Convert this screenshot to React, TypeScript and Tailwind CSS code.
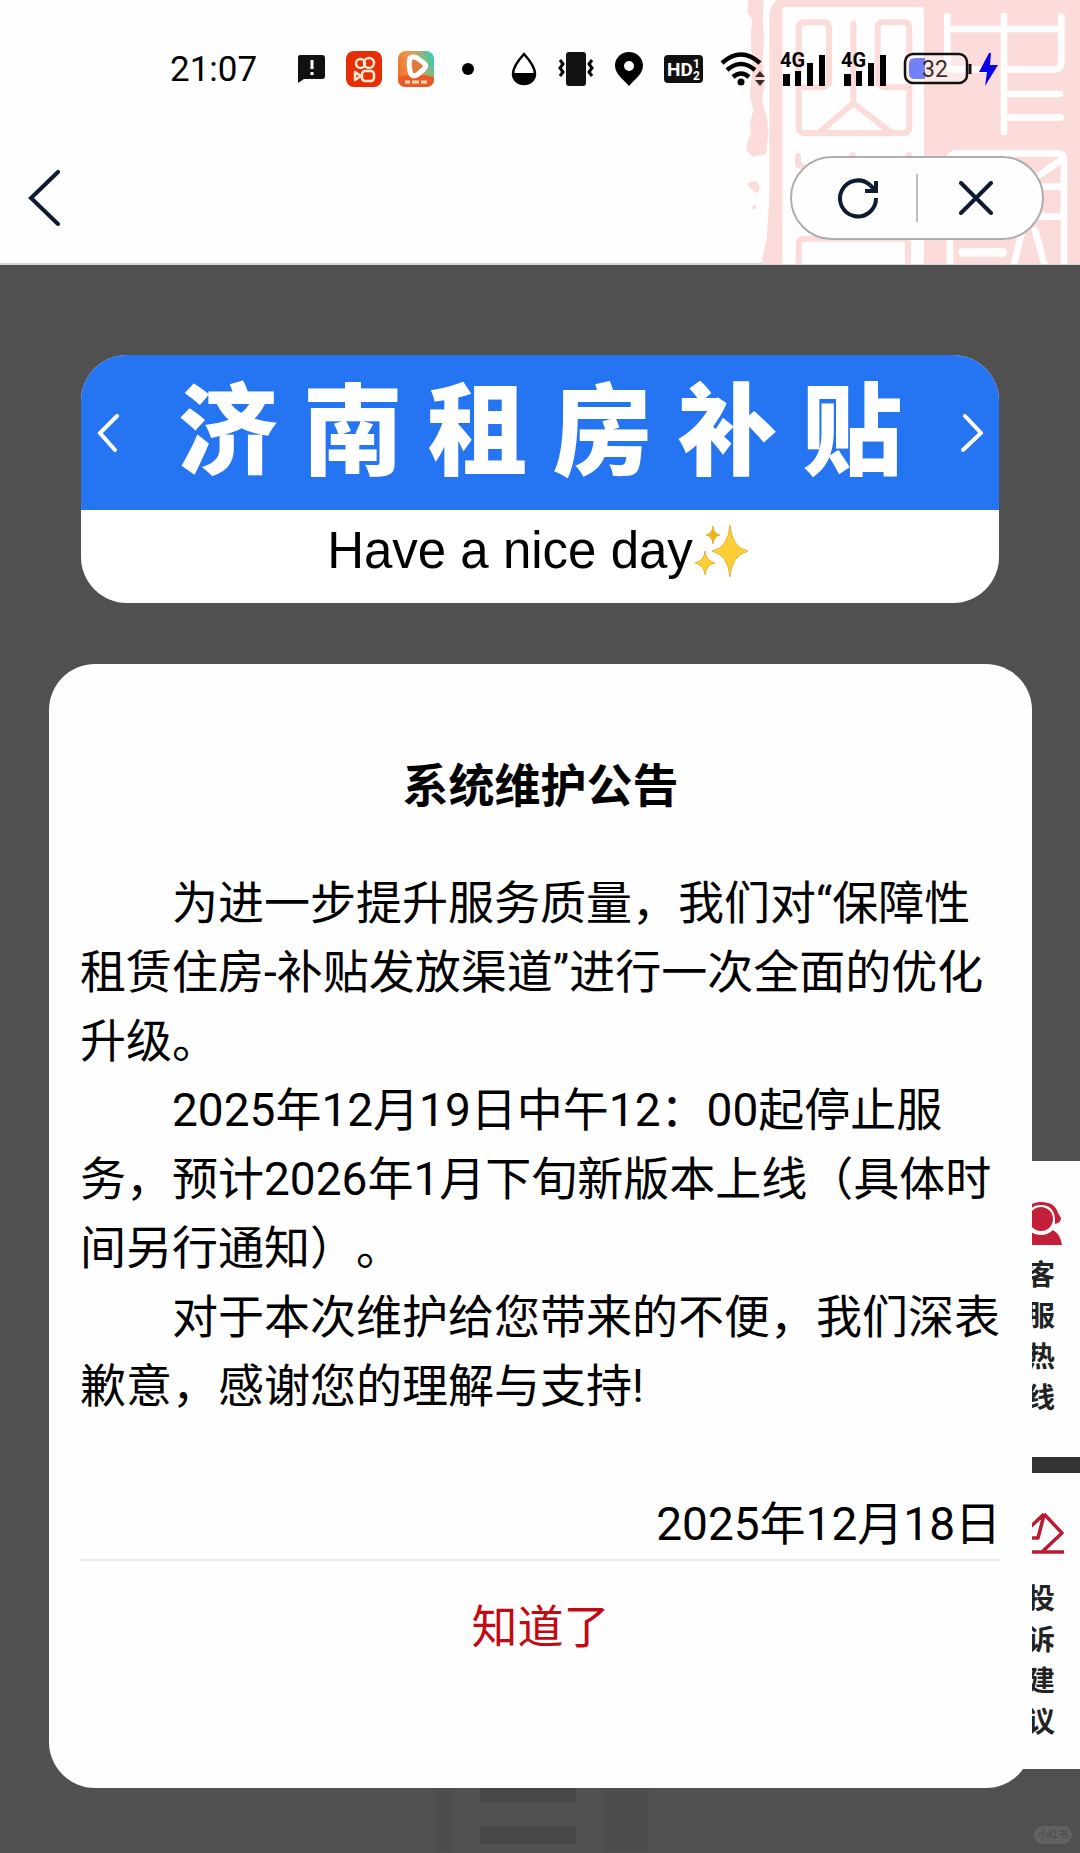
import { useState } from "react";

const seal = "#fbdcda";

const SealBackdrop = () => (
  <svg
    viewBox="0 0 1080 792"
    className="absolute top-0 right-0 w-[360px] h-[264px]"
    fill="none"
    aria-hidden="true"
  >
    <path
      fill={seal}
      d="M85 0H132L128 60L132 110L128 190L134 250L126 300L142 360L145 400L138 462L98 471L79 450L82 425L92 405L90 370L100 330L90 290L97 200L92 100L97 60L82 35Z"
    />
    <path fill={seal} d="M84 550Q104 535 118 555Q122 572 106 580L97 568Q86 565 84 550Z" />
    <circle cx="103" cy="622" r="6" fill={seal} />
    <path fill={seal} d="M170 0H1080V792H124L140 715L148 600V45Q150 15 170 0Z" />
    <path fill="#fefefe" d="M188 22H612V792H188Z" />
    <g stroke={seal} strokeWidth="18" strokeLinecap="round" strokeLinejoin="round">
      <path d="M327 250V85Q327 67 308 67H255Q236 67 236 85V380Q236 399 255 399H550Q568 399 568 380V85Q568 67 550 67H490Q473 67 473 85V250" />
      <path d="M236 262H300Q327 262 327 235M568 262H500Q473 262 473 235" />
      <path d="M400 70V310M400 310L300 395M400 310L510 395" />
      <path d="M234 468V495L250 500M398 466V480M566 466V480" />
      <path d="M236 800V732Q236 716 252 716H550Q564 716 564 732V800" />
    </g>
    <g stroke="#fefefe" strokeWidth="20" strokeLinecap="round" strokeLinejoin="round">
      <path d="M682 48V190Q682 208 700 208H800M682 87H1024V50M1024 87V190Q1024 208 1006 208H852" />
      <path d="M852 48V395M852 282H1020M852 352H1022" />
      <path d="M690 800V480Q690 460 710 460H1010Q1032 460 1032 482V800" />
      <path d="M930 545L1020 482M940 560H1032M930 650H1032M905 700L880 800M945 690L975 800" />
      <path d="M728 757H848" strokeWidth="26" />
    </g>
  </svg>
);

const Signal = ({ className }: { className: string }) => (
  <svg viewBox="0 -4 46 44" className={className} aria-label="4G">
    <text x="0" y="16" fontSize="20" fontWeight="700" fontFamily="Roboto, sans-serif">
      4G
    </text>
    <path d="M3 23h7v12H3zM15 20h6v15h-6zM27 12h6v23h-6zM39 4h6v31h-6z" />
  </svg>
);

const StatusBar = () => (
  <div className="relative h-[138px] pl-[170px] flex items-center gap-3">
    <span className="w-28 text-[35px] leading-none">21:07</span>
    <svg viewBox="0 0 36 36" className="w-9 h-9">
      <path d="M6 4h22q3 0 3 3v18q0 3-3 3H10l-6 4V6q0-2 2-2z" fill="#111" />
      <path d="M18 9v9M18 21v3" stroke="#fff" strokeWidth="3" />
    </svg>
    <svg viewBox="0 0 44 36" className="w-11 h-9" fill="none" stroke="#ffe9d0" strokeWidth="2.5">
      <rect x="4" y="0" width="36" height="36" rx="8" fill="#e62e06" stroke="none" />
      <circle cx="18.5" cy="12.5" r="4.5" />
      <circle cx="27" cy="12" r="5" />
      <rect x="20" y="20" width="12" height="10" rx="3" />
      <path d="M13 21l6 4-6 4z" strokeLinejoin="round" />
    </svg>
    <svg viewBox="0 0 36 36" className="w-9 h-9">
      <defs>
        <linearGradient id="app" x1="0" y1="0.6" x2="1" y2="0.2">
          <stop offset="0" stopColor="#ee7428" />
          <stop offset="0.5" stopColor="#e79a50" />
          <stop offset="1" stopColor="#2fd0b4" />
        </linearGradient>
      </defs>
      <rect width="36" height="36" rx="8" fill="url(#app)" />
      <path d="M0 26Q18 21 36 26V28Q36 36 28 36H8Q0 36 0 28Z" fill="#ea5a24" />
      <path
        d="M12 7q3-2 7 0l7 5q3 3 0 6l-7 6q-4 2-6-1-3-8-1-16z"
        fill="#e07a3c"
        stroke="#fff"
        strokeWidth="5"
        strokeLinejoin="round"
      />
      <path d="M7 31h5M14 31h7M23 31h6" stroke="#ffd9b8" strokeWidth="3" />
    </svg>
    <svg viewBox="0 0 44 36" className="w-11 h-9">
      <circle cx="22" cy="18" r="6" />
    </svg>
    <svg viewBox="0 0 44 36" className="w-11 h-9">
      <path
        d="M22 3Q11 15 11 23a11 10 0 0 0 22 0Q33 15 22 3z"
        fill="none"
        stroke="#000"
        strokeWidth="2.5"
      />
      <path d="M11 22h22q0 11-11 11t-11-11z" />
    </svg>
    <svg viewBox="0 0 36 36" className="w-9 h-9">
      <rect x="8" y="1" width="20" height="34" rx="3" fill="#111" />
      <path
        d="M2 9l3 4-3 4 3 4-3 4M34 9l-3 4 3 4-3 4 3 4"
        fill="none"
        stroke="#000"
        strokeWidth="3"
      />
    </svg>
    <svg viewBox="0 0 46 36" className="w-[46px] h-9">
      <path
        d="M23 1C15 1 9 7 9 14.5C9 23 17 28 23 35C29 28 37 23 37 14.5C37 7 31 1 23 1zM23 10a5 5 0 1 1 0 10a5 5 0 1 1 0-10z"
        fillRule="evenodd"
      />
    </svg>
    <svg viewBox="0 0 40 36" className="w-10 h-9" fontFamily="Roboto, sans-serif" fontWeight="700">
      <rect x="0" y="4" width="39" height="28" rx="4" fill="#111" />
      <text x="3" y="25" fontSize="19" fill="#fff">
        HD
      </text>
      <text x="29" y="17" fontSize="12" fill="#fff">
        1
      </text>
      <text x="29" y="29" fontSize="12" fill="#fff">
        2
      </text>
    </svg>
    <svg viewBox="0 0 52 36" className="w-[52px] h-9">
      <g fill="none" stroke="#000" strokeWidth="4.5">
        <path d="M6 12Q25-5 44 12" />
        <path d="M11 19Q25 7 39 19" />
        <path d="M17 26Q25 19 33 26" />
      </g>
      <circle cx="25" cy="31" r="3.5" />
      <path d="M44 20l5 6H39zM44 35l5-6H39z" fill="#3a2c2c" />
    </svg>
    <Signal className="w-[46px] h-11" />
    <Signal className="w-[52px] h-11" />
    <svg viewBox="0 0 98 36" className="w-[98px] h-9">
      <rect
        x="3"
        y="3"
        width="62"
        height="29"
        rx="8"
        fill="#fefefe"
        fillOpacity="0.4"
        stroke="#111"
        strokeWidth="2.5"
      />
      <path d="M13 7h10v21H13q-6 0-6-6v-9q0-6 6-6z" fill="#7480f5" />
      <path d="M68 13v10" stroke="#111" strokeWidth="3" />
      <text x="20" y="26" fontSize="23" fill="#3a2c2c" fontFamily="Roboto, sans-serif">
        32
      </text>
      <path d="M87 2L77 21h8l-2 14L96 14h-8l1-12z" fill="#0c00e8" />
    </svg>
  </div>
);

const TitleBar = () => (
  <div className="relative h-[120px] pl-7 pr-9 flex items-center justify-between">
    <button aria-label="返回">
      <svg viewBox="0 0 32 56" className="w-8 h-14" fill="none" stroke="#0d1b33" strokeWidth="4">
        <path d="M30 2L3 28L30 54" strokeLinecap="round" />
      </svg>
    </button>
    <div className="w-[254px] h-[84px] pr-1 rounded-full border-2 border-[#adadad] bg-[#fefefe] flex items-center">
      <button aria-label="刷新" className="flex-1 flex justify-center pl-2">
        <svg
          viewBox="0 0 42 42"
          className="w-[42px] h-[42px]"
          fill="none"
          stroke="#0d1b33"
          strokeWidth="4"
        >
          <path d="M39 21A18 18 0 1 1 33 8" />
          <path d="M39 4V14H28M33 8l5 5" />
        </svg>
      </button>
      <span className="w-[2px] h-12 bg-[#bdbdbd]" />
      <button aria-label="关闭" className="flex-1 flex justify-center pr-1">
        <svg
          viewBox="0 0 34 34"
          className="w-[34px] h-[34px]"
          stroke="#0d1b33"
          strokeWidth="4"
          strokeLinecap="round"
        >
          <path d="M2 2L32 32M32 2L2 32" />
        </svg>
      </button>
    </div>
  </div>
);

const Banner = () => (
  <section className="mx-[81px] mt-[90px] rounded-[46px] overflow-hidden bg-white">
    <div className="h-[155px] px-4 bg-[#2575f3] flex items-center justify-between text-white">
      <button aria-label="上一个">
        <svg
          viewBox="0 0 22 38"
          className="w-[22px] h-[38px]"
          fill="none"
          stroke="currentColor"
          strokeWidth="4"
        >
          <path d="M20 2L3 19L18 36" strokeLinecap="round" />
        </svg>
      </button>
      <h1 className="text-[100px] leading-none font-black">济 南 租 房 补 贴</h1>
      <button aria-label="下一个">
        <svg
          viewBox="0 0 22 38"
          className="w-[22px] h-[38px]"
          fill="none"
          stroke="currentColor"
          strokeWidth="4"
        >
          <path d="M4 2L20 19L2 36" strokeLinecap="round" />
        </svg>
      </button>
    </div>
    <div className="h-[93px] pb-3 pr-1 flex items-center justify-center">
      <p className="text-[51px] leading-none font-['Liberation_Sans',sans-serif]">
        Have a nice day
      </p>
      <svg
        viewBox="0 0 56 54"
        className="w-14 h-[54px]"
        fill="#fbcf33"
        stroke="#e9b23a"
        strokeWidth="1"
      >
        <path d="M37 1Q39 24 55 27Q39 31 37 53Q35 31 19 27Q35 24 37 1Z" />
        <path d="M12 27Q13 37 22 39Q13 41 12 51Q11 41 2 39Q11 37 12 27Z" />
        <path d="M20 2Q21 10 27 11Q21 12 20 20Q19 12 13 11Q19 10 20 2Z" fill="#efb31c" />
      </svg>
    </div>
  </section>
);

const NoticeCard = ({ onClose }: { onClose: () => void }) => (
  <section
    role="dialog"
    aria-labelledby="notice-title"
    className="relative z-10 ml-[49px] mr-12 mt-[61px] px-[31px] pt-[88px] pb-[126px] rounded-[46px] bg-[#fefefe] [text-spacing-trim:space-all]"
  >
    <h2 id="notice-title" className="text-[46px] leading-[69px] font-bold text-center">
      系统维护公告
    </h2>
    <div className="mt-12 text-[46px] leading-[69px]">
      <p className="indent-[2em]">
        为进一步提升服务质量，我们对“保障性租赁住房-补贴发放渠道”进行一次全面的优化升级。
      </p>
      <p className="indent-[2em]">
        2025年12月19日中午12：00起停止服务，预计2026年1月下旬新版本上线（具体时间另行通知）。
      </p>
      <p className="indent-[2em]">
        对于本次维护给您带来的不便，我们深表歉意，感谢您的理解与支持!
      </p>
      <p className="mt-[69px] text-right">2025年12月18日</p>
    </div>
    <div className="border-t-2 border-[#ececec] pt-8 flex justify-center">
      <button onClick={onClose} className="text-[46px] leading-[69px] text-[#c20a12]">
        知道了
      </button>
    </div>
  </section>
);

const SideMenu = () => (
  <aside className="absolute top-[896px] right-0 w-[78px] bg-[#333] flex flex-col gap-4 text-[28px] leading-[41px] font-bold text-[#222]">
    <a href="#hotline" className="h-[296px] pt-10 bg-[#fefefe] flex flex-col items-center">
      <svg viewBox="0 0 44 44" className="w-11 h-11 mb-[10px]" fill="#c41f38">
        <circle cx="22" cy="18" r="12" />
        <path d="M4 16Q8 1 22 1Q36 1 39 12L42 17Q42 22 36 23V17Q34 4 22 4Q10 4 8 17V23Q2 22 4 16Z" />
        <path d="M1 44Q2 34 9 29Q15 34 22 34Q29 34 34 29Q42 34 43 44Z" />
      </svg>
      <span className="w-7">客服热线</span>
    </a>
    <a href="#feedback" className="h-[296px] pt-9 bg-[#fefefe] flex flex-col items-center">
      <svg
        viewBox="0 0 46 46"
        className="w-[46px] h-[46px] mb-6"
        fill="none"
        stroke="#b81c32"
        strokeWidth="3.5"
        strokeLinejoin="round"
      >
        <path d="M26 5L44 24L25 42M26 5L6 24M6 29H20L26 6M2 43H46" />
      </svg>
      <span className="w-7">投诉建议</span>
    </a>
  </aside>
);

const App = () => {
  const [open, setOpen] = useState(true);

  return (
    <div className="min-h-screen bg-[#505050] text-black font-[Roboto,'Noto_Sans_CJK_SC',sans-serif] flex flex-col">
      <header className="relative h-[265px] bg-[#fefefe] border-b-2 border-[#d4d4d4]">
        <SealBackdrop />
        <StatusBar />
        <TitleBar />
      </header>
      <main className="relative flex-1">
        <Banner />
        {open && <NoticeCard onClose={() => setOpen(false)} />}
        <SideMenu />
        {/* page content dimmed under the dialog */}
        <div className="h-16 pl-[437px] pr-2 flex items-start">
          <span className="w-4 h-16 bg-[#4c4e4d]" />
          <div className="w-[150px] flex flex-col items-center gap-6">
            <span className="w-24 h-[14px] bg-[#474747]" />
            <span className="w-24 h-[18px] bg-[#474747]" />
          </div>
          <span className="w-[46px] h-16 bg-[#4c4e4d]" />
          <span className="ml-auto mt-[38px] px-1 rounded-full bg-[#626262] text-[#484848] text-[10px] leading-[18px]">
            小红书
          </span>
        </div>
      </main>
    </div>
  );
};

export default App;
